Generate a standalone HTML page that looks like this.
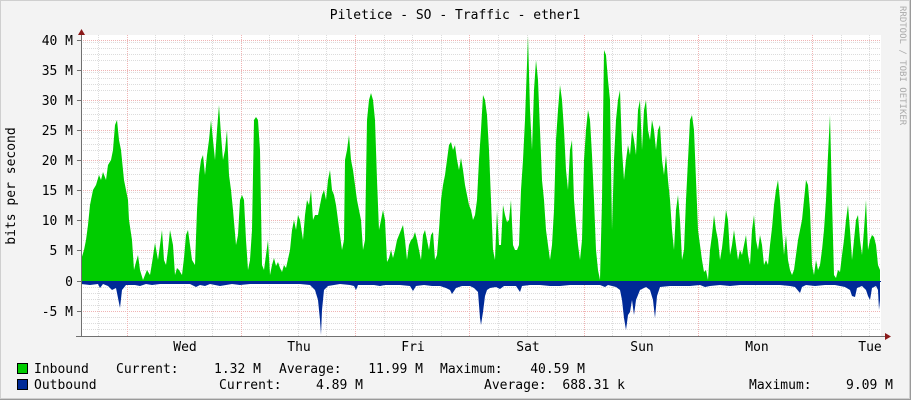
<!DOCTYPE html>
<html><head><meta charset="utf-8"><style>
html,body{margin:0;padding:0;background:#f3f3f3;}
body{width:911px;height:400px;overflow:hidden;position:relative;}
svg{position:absolute;left:0;top:0;}
text{font-family:"DejaVu Sans Mono","Liberation Mono",monospace;font-size:13px;fill:#000;}
</style></head><body>
<svg width="911" height="400" xmlns="http://www.w3.org/2000/svg">
<rect x="0" y="0" width="911" height="400" fill="#f3f3f3"/>
<rect x="0.5" y="0.5" width="909" height="398" fill="none" stroke="#cfcfcf"/>
<line x1="0" y1="399.5" x2="911" y2="399.5" stroke="#9a9a9a"/>
<line x1="910.5" y1="0" x2="910.5" y2="400" stroke="#9a9a9a"/>
<rect x="81" y="35" width="800" height="301" fill="#fff"/>
<g stroke="#dcdcdc" stroke-dasharray="1,1" stroke-width="1">
<path d="M81 42.5H881M81 48.5H881M81 54.5H881M81 60.5H881M81 72.5H881M81 78.5H881M81 84.5H881M81 90.5H881M81 102.5H881M81 108.5H881M81 114.5H881M81 120.5H881M81 132.5H881M81 138.5H881M81 144.5H881M81 150.5H881M81 162.5H881M81 168.5H881M81 174.5H881M81 180.5H881M81 192.5H881M81 198.5H881M81 204.5H881M81 210.5H881M81 222.5H881M81 228.5H881M81 234.5H881M81 240.5H881M81 252.5H881M81 258.5H881M81 264.5H881M81 270.5H881M81 287.5H881M81 293.5H881M81 299.5H881M81 305.5H881M81 317.5H881M81 323.5H881M81 329.5H881"/>
<path d="M98.5 35V336M155.5 35V336M184.5 35V336M212.5 35V336M269.5 35V336M298.5 35V336M326.5 35V336M384.5 35V336M412.5 35V336M441.5 35V336M498.5 35V336M527.5 35V336M555.5 35V336M612.5 35V336M641.5 35V336M669.5 35V336M726.5 35V336M755.5 35V336M784.5 35V336M841.5 35V336M869.5 35V336"/>
</g>
<g stroke="#f0b4b4" stroke-dasharray="1,1" stroke-width="1">
<path d="M81 40.5H881M81 70.5H881M81 100.5H881M81 130.5H881M81 160.5H881M81 190.5H881M81 220.5H881M81 250.5H881M81 311.5H881"/>
<path d="M127.5 35V336M241.5 35V336M355.5 35V336M469.5 35V336M584.5 35V336M698.5 35V336M812.5 35V336"/>
</g>
<polygon fill="#00cc00" points="81,281 81,260 84,250 86,240 88,225 90,205 93,190 96,185 99,175 101,180 103,172 106,180 108,165 111,160 113,150 115,125 117,120 119,140 121,150 124,180 126,190 128,200 129,220 132,240 134,270 136,262 138,255 140,270 143,280 145,275 147,270 150,275 152,263 155,243 158,260 160,245 162,230 164,260 166,265 168,250 170,230 173,245 175,275 177,268 179,270 182,275 184,258 186,235 188,230 190,245 192,260 195,265 197,210 199,175 201,160 203,155 205,175 207,155 209,140 211,120 213,140 215,160 217,130 219,105 221,135 223,160 225,150 227,130 229,175 231,190 233,210 236,245 238,235 240,200 242,195 244,200 246,240 248,270 250,260 252,230 254,120 256,117 258,120 260,150 262,265 264,270 266,255 268,240 270,275 272,265 274,258 276,266 278,262 280,268 282,272 284,265 286,268 290,250 292,230 294,220 296,230 298,215 300,220 303,240 305,215 307,200 309,205 311,190 313,220 315,215 318,215 320,205 322,195 324,190 326,200 328,180 330,170 332,190 334,195 336,205 338,220 340,235 342,250 344,240 345,160 347,150 349,135 351,160 353,170 355,185 357,200 359,210 361,220 363,250 365,240 367,120 369,100 371,93 373,100 375,120 377,180 379,230 381,220 383,210 385,220 387,262 389,258 391,250 393,258 395,250 397,240 399,235 401,230 403,225 405,240 407,260 409,245 411,240 413,238 415,232 417,240 419,250 421,260 423,235 425,230 427,240 429,250 431,235 433,232 435,260 437,255 439,230 441,200 443,185 445,175 447,160 449,145 451,142 453,150 455,145 457,160 459,170 461,158 463,170 465,185 467,195 469,205 471,210 473,220 475,215 477,200 479,160 481,130 483,95 485,100 487,115 489,150 491,200 493,250 495,260 497,210 499,245 501,245 503,205 505,215 507,222 509,220 511,200 513,245 515,250 517,250 519,245 521,190 523,160 525,120 528,36 530,110 532,150 534,90 536,60 538,80 540,130 542,180 544,200 546,230 548,245 550,260 552,245 554,210 556,140 558,110 560,85 562,100 564,130 566,170 568,190 570,150 572,140 574,200 576,225 578,245 580,260 582,240 584,160 586,130 588,110 590,120 592,155 594,200 596,250 598,270 600,280 602,200 604,50 606,55 608,80 610,100 612,230 614,160 616,120 618,100 620,90 622,150 624,180 626,160 628,145 630,155 632,130 634,140 636,155 638,110 640,100 642,150 644,110 646,100 648,130 650,140 652,120 654,130 656,150 658,130 660,125 662,160 664,175 666,155 668,180 670,200 672,230 674,250 676,210 678,195 680,220 682,260 684,250 686,200 688,160 690,120 692,115 694,130 696,180 698,230 700,245 702,260 704,272 706,270 708,280 710,250 712,235 714,215 716,230 718,240 720,260 722,248 724,230 726,210 728,220 730,255 732,245 734,230 736,245 738,260 740,250 742,255 744,245 746,235 748,255 750,265 752,230 754,215 756,240 758,250 760,235 762,245 764,265 766,260 768,265 770,245 772,228 774,205 776,190 778,180 780,200 782,230 784,255 786,235 788,260 790,270 792,275 794,270 796,255 798,240 800,230 802,220 804,200 806,180 808,185 810,210 812,265 814,275 816,260 818,270 820,265 822,250 824,230 826,200 828,155 830,115 832,200 834,275 836,278 838,270 840,272 842,255 844,240 846,220 848,205 850,230 852,260 854,240 856,220 858,215 860,240 862,255 864,230 866,200 868,250 870,240 872,235 874,237 876,245 878,265 880,270 880,281"/>
<polygon fill="#002a97" points="81,281 81,284 90,285 98,284 100,288 103,284 108,286 112,290 116,288 118,298 120,308 122,290 126,285 135,285 140,286 146,284 152,285 160,284 170,284 180,284 190,284 196,287 200,285 205,286 210,284 220,286 226,285 232,284 240,285 250,284 260,284 270,284 280,284 290,284 300,284 310,285 315,290 318,300 320,320 321,335 322,310 324,290 328,286 334,285 340,284 350,285 354,286 356,290 358,285 366,285 374,285 380,286 385,285 392,285 400,285 410,286 413,291 416,286 424,285 432,286 440,286 446,288 450,290 452,294 456,288 462,286 470,286 474,288 478,292 480,318 481,325 483,312 485,296 487,290 490,288 496,287 500,289 504,286 510,286 516,286 520,292 522,286 530,285 540,285 550,286 560,286 570,285 580,285 590,285 600,285 605,287 608,285 612,286 616,287 620,290 622,300 624,318 626,330 628,315 630,312 632,300 634,315 636,300 640,290 646,287 650,290 653,300 655,318 657,296 660,287 670,286 680,286 690,286 700,285 705,287 710,286 720,285 730,286 740,285 750,285 760,285 770,285 780,285 790,286 795,287 800,293 802,287 806,285 815,286 825,285 835,285 845,287 850,290 852,296 855,297 857,288 862,286 866,290 868,296 870,300 872,288 876,286 878,290 879,310 880,300 880,281"/>
<line x1="81" y1="281.5" x2="881" y2="281.5" stroke="#002a97" stroke-width="1"/>
<g stroke="#707070" stroke-width="1">
<line x1="81.5" y1="31" x2="81.5" y2="337"/>
<line x1="76" y1="336.5" x2="885" y2="336.5"/>
<path d="M77 40.5H81M77 70.5H81M77 100.5H81M77 130.5H81M77 160.5H81M77 190.5H81M77 220.5H81M77 250.5H81M77 281.5H81M77 311.5H81"/>
</g>
<polygon points="78,35 85,35 81.5,29" fill="#8b1a1a"/>
<polygon points="885,333 885,340 891,336.5" fill="#8b1a1a"/>
<text x="455" y="19" text-anchor="middle">Piletice - SO - Traffic - ether1</text>
<g text-anchor="end">
<text x="73" y="45">40 M</text><text x="73" y="75">35 M</text><text x="73" y="105">30 M</text><text x="73" y="135">25 M</text><text x="73" y="165">20 M</text><text x="73" y="195">15 M</text><text x="73" y="225">10 M</text><text x="73" y="255">5 M</text><text x="73" y="286">0</text><text x="73" y="316">-5 M</text>
</g>
<text transform="translate(15,186) rotate(-90)" text-anchor="middle">bits per second</text>
<text transform="translate(900,6) rotate(90)" style="font-size:9px;fill:#aaa">RRDTOOL / TOBI OETIKER</text>
<g text-anchor="middle">
<text x="185" y="351">Wed</text><text x="299" y="351">Thu</text><text x="413" y="351">Fri</text><text x="528" y="351">Sat</text><text x="642" y="351">Sun</text><text x="757" y="351">Mon</text><text x="870" y="351">Tue</text>
</g>
<rect x="17.5" y="363.5" width="10" height="10" fill="#00cc00" stroke="#000"/>
<rect x="17.5" y="379.5" width="10" height="10" fill="#002a97" stroke="#000"/>
<text x="34" y="373">Inbound</text>
<text x="116" y="373">Current:</text>
<text x="261" y="373" text-anchor="end">1.32 M</text>
<text x="279" y="373">Average:</text>
<text x="423" y="373" text-anchor="end">11.99 M</text>
<text x="440" y="373">Maximum:</text>
<text x="585" y="373" text-anchor="end">40.59 M</text>
<text x="34" y="389">Outbound</text>
<text x="219" y="389">Current:</text>
<text x="363" y="389" text-anchor="end">4.89 M</text>
<text x="484" y="389">Average:</text>
<text x="625" y="389" text-anchor="end">688.31 k</text>
<text x="749" y="389">Maximum:</text>
<text x="893" y="389" text-anchor="end">9.09 M</text>
</svg>
</body></html>
